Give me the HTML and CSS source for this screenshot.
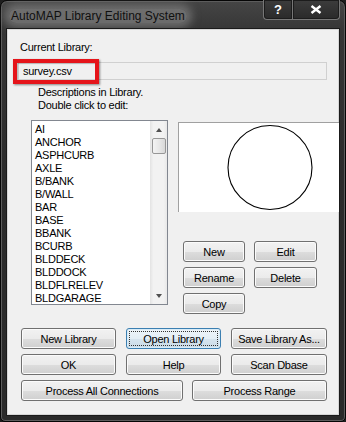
FILE: index.html
```html
<!DOCTYPE html>
<html>

<head>
    <meta charset="utf-8">
    <title>AutoMAP Library Editing System</title>
    <link rel="stylesheet" href="styles.css">
</head>

<body>
    <div class="window">
        <div class="titlebar">
            <div class="title">AutoMAP Library Editing System</div>
            <div class="caption">
                <div class="cap-btn cap-help">?</div>
                <div class="cap-btn cap-close">
                    <svg width="12" height="9" viewBox="0 0 12 9">
                        <path d="M1.5 1 L10.5 8 M10.5 1 L1.5 8" stroke="#fff" stroke-width="2.4" />
                    </svg>
                </div>
            </div>
        </div>

        <div class="client">
            <div class="cur-label">Current Library:</div>
            <div class="field">
                survey.csv
                <span class="mark"></span>
            </div>

            <div class="middle">
                <div class="left">
                    <div class="desc">Descriptions in Library.<br>Double click to edit:</div>
                    <div class="listbox">
                        <div class="items">
                            <div>AI</div>
                            <div>ANCHOR</div>
                            <div>ASPHCURB</div>
                            <div>AXLE</div>
                            <div>B/BANK</div>
                            <div>B/WALL</div>
                            <div>BAR</div>
                            <div>BASE</div>
                            <div>BBANK</div>
                            <div>BCURB</div>
                            <div>BLDDECK</div>
                            <div>BLDDOCK</div>
                            <div>BLDFLRELEV</div>
                            <div>BLDGARAGE</div>
                        </div>
                        <div class="scrollbar">
                            <div class="arrow arrow-up"></div>
                            <div class="thumb"></div>
                            <div class="track"></div>
                            <div class="arrow arrow-down"></div>
                        </div>
                    </div>
                </div>

                <div class="right">
                    <div class="preview">
                        <svg width="160" height="89" viewBox="0 0 160 89">
                            <circle cx="91" cy="44.5" r="42" fill="none" stroke="#000" stroke-width="1.1" />
                        </svg>
                    </div>
                    <div class="edit-btns">
                        <div class="btn">New</div>
                        <div class="btn">Edit</div>
                        <div class="btn">Rename</div>
                        <div class="btn">Delete</div>
                        <div class="btn">Copy</div>
                    </div>
                </div>
            </div>

            <div class="bottom">
                <div class="row">
                    <div class="btn w95">New Library</div>
                    <div class="btn w95 default"><span class="focus">Open Library</span></div>
                    <div class="btn w96">Save Library As...</div>
                </div>
                <div class="row">
                    <div class="btn w95">OK</div>
                    <div class="btn w95">Help</div>
                    <div class="btn w96">Scan Dbase</div>
                </div>
                <div class="row row-gap9">
                    <div class="btn w162">Process All Connections</div>
                    <div class="btn w135">Process Range</div>
                </div>
            </div>
        </div>
    </div>
</body>

</html>
```

FILE: styles.css
```css
/* page = the window itself */
html,
body {
    margin: 0;
    padding: 0;
}

body {
    width: 346px;
    height: 422px;
    overflow: hidden;
    background: #1e1e1e;
    font-family: "Liberation Sans", Arial, sans-serif;
}

/* dark glass frame */
.window {
    box-sizing: border-box;
    width: 346px;
    height: 422px;
    display: flex;
    flex-direction: column;
    border: 1px solid #050505;
    border-radius: 7px 7px 5px 5px;
    background: linear-gradient(180deg, #454545 0%, #363636 7%, #2c2c2c 40%, #2a2a2a 100%);
    box-shadow: inset 0 0 0 1px #5c5c5c;
}

/* title bar */
.titlebar {
    height: 28px;
    display: flex;
    align-items: flex-start;
}

.title {
    margin: 8px 0 0 8px;
    padding: 0 2px;
    height: 14px;
    line-height: 14px;
    font-size: 12px;
    color: #101010;
    background: rgba(140, 140, 140, 0.6);
    border-radius: 7px;
    box-shadow: 0 0 8px 5px rgba(140, 140, 140, 0.6);
}

.caption {
    margin-left: auto;
    margin-right: 5px;
    margin-top: -1px;
    display: flex;
}

.cap-btn {
    box-sizing: border-box;
    height: 20px;
    display: flex;
    align-items: center;
    justify-content: center;
    color: #fff;
    font-weight: bold;
    font-size: 13px;
    border: 1px solid #777;
    border-top: none;
    background: linear-gradient(180deg, #3c3c3c, #2a2a2a);
    box-shadow: inset 0 0 0 1px #1c1c1c;
}

.cap-help {
    width: 29px;
    border-radius: 0 0 0 4px;
    border-right: none;
}

.cap-close {
    width: 48px;
    border-radius: 0 0 4px 0;
}

/* client area */
.client {
    flex: 1;
    margin: 0 6px 6px 6px;
    padding-top: 12px;
    background: #f0f0f0;
    box-shadow: 0 0 0 1px #1a1a1a, inset 0 0 0 1px #d6d6d6;
    font-size: 11px;
    letter-spacing: -0.25px;
    color: #000;
}

.cur-label {
    margin-left: 13px;
    line-height: 13px;
}

.field {
    position: relative;
    box-sizing: border-box;
    width: 309px;
    height: 18px;
    margin: 8px 0 0 11px;
    padding-left: 4px;
    line-height: 16px;
    border: 1px solid #d0d0d0;
    background: #f0f0f0;
}

/* red highlight drawn over the field */
.mark {
    position: absolute;
    left: -6px;
    top: -4px;
    width: 86px;
    height: 25px;
    box-sizing: border-box;
    border: 4px solid #e5141a;
    box-shadow: 1px 1px 2px rgba(0, 0, 0, 0.45), inset 1px 1px 1px rgba(0, 0, 0, 0.25);
}

.middle {
    display: flex;
    margin-top: 6px;
}

.left {
    margin-left: 24px;
    width: 137px;
}

.desc {
    padding-left: 7px;
    line-height: 13px;
}

.listbox {
    box-sizing: border-box;
    margin-top: 8px;
    height: 185px;
    display: flex;
    border: 1px solid #828790;
    background: #fff;
}

.items {
    flex: 1;
    padding: 2px 0 0 3px;
    line-height: 13px;
    overflow: hidden;
}

.scrollbar {
    width: 17px;
    display: flex;
    flex-direction: column;
    align-items: center;
    background: linear-gradient(90deg, #e3e3e3 0%, #f2f2f2 20%, #f2f2f2 80%, #e8e8e8 100%);
}

.track {
    flex: 1;
}

.arrow {
    height: 17px;
    width: 15px;
    display: flex;
    align-items: center;
    justify-content: center;
}

.arrow::before {
    content: "";
    border-left: 3.5px solid transparent;
    border-right: 3.5px solid transparent;
}

.arrow-up::before {
    border-bottom: 4px solid #505050;
}

.arrow-down::before {
    border-top: 4px solid #505050;
}

.thumb {
    box-sizing: border-box;
    width: 14px;
    height: 16px;
    border: 1px solid #979797;
    border-radius: 2px;
    background: linear-gradient(90deg, #f4f4f4 0%, #e8e8e8 50%, #d8d8d8 100%);
}

.right {
    flex: 1;
    margin-left: 10px;
    padding-top: 36px;
}

.preview {
    height: 90px;
    box-sizing: border-box;
    border-top: 1px solid #a0a0a0;
    border-left: 1px solid #a0a0a0;
    background: #fff;
}

.preview svg {
    display: block;
}

.edit-btns {
    display: grid;
    grid-template-columns: 62px 63px;
    grid-auto-rows: 21px;
    column-gap: 9px;
    row-gap: 5px;
    margin-top: 29px;
    padding-left: 5px;
}

/* win7 push button */
.btn {
    box-sizing: border-box;
    height: 21px;
    display: flex;
    align-items: center;
    justify-content: center;
    border: 1px solid #707070;
    border-radius: 3px;
    background: linear-gradient(180deg, #f2f2f2 0%, #ebebeb 50%, #dddddd 51%, #cfcfcf 100%);
    box-shadow: inset 0 0 0 1px #fbfbfb;
    white-space: nowrap;
}

.default {
    border-color: #3c7fb1;
    background: linear-gradient(180deg, #eef4f8 0%, #e4eef5 50%, #d6e4ee 51%, #cadbe7 100%);
    box-shadow: inset 0 0 0 1px #d8ecf8;
}

.focus {
    box-sizing: border-box;
    width: calc(100% - 6px);
    height: calc(100% - 6px);
    display: flex;
    align-items: center;
    justify-content: center;
    outline: 1px dotted #333;
}

.bottom {
    margin-top: 14px;
    padding-left: 14px;
    display: flex;
    flex-direction: column;
    gap: 5px;
}

.row {
    display: flex;
    gap: 10px;
}

.row-gap9 {
    gap: 9px;
}

.w95 {
    width: 95px;
}

.w96 {
    width: 96px;
}

.w162 {
    width: 162px;
}

.w135 {
    width: 135px;
}
```
